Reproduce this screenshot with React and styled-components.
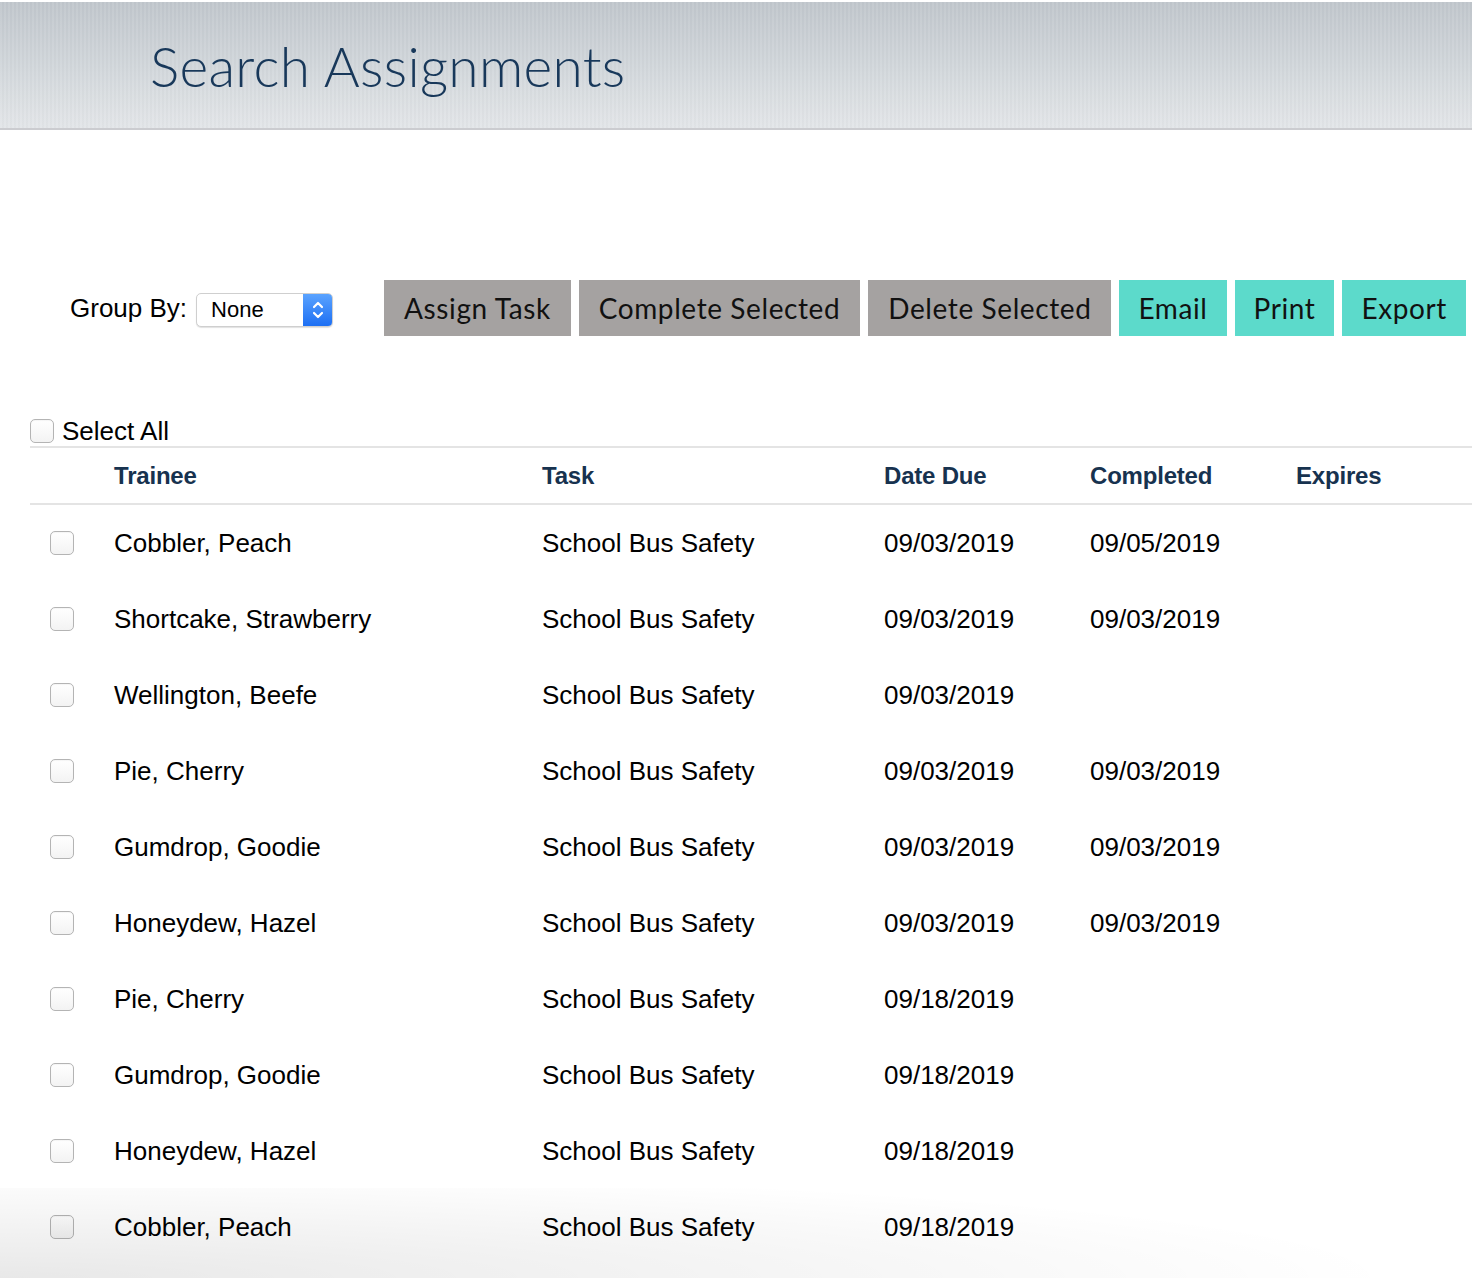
import React from 'react';
import styled, { createGlobalStyle } from 'styled-components';

const GlobalStyle = createGlobalStyle`
  html, body {
    margin: 0;
    padding: 0;
    background: #ffffff;
  }
  body {
    font-family: "Liberation Sans", Arial, sans-serif;
    color: #000;
  }
`;

const Page = styled.div`
  position: relative;
  min-height: 1278px;
  overflow: hidden;

  &::after {
    content: '';
    position: absolute;
    left: 0;
    right: 0;
    bottom: 0;
    height: 90px;
    pointer-events: none;
    background: radial-gradient(ellipse 1400px 110px at 0% 100%, rgba(0, 0, 0, 0.09), rgba(0, 0, 0, 0) 100%);
  }
`;

const Banner = styled.header`
  height: 126px;
  margin-top: 2px;
  border-bottom: 2px solid #cbccd0;
  background:
    repeating-linear-gradient(90deg, rgba(255, 255, 255, 0.05) 0 2px, rgba(0, 0, 0, 0.015) 2px 4px),
    linear-gradient(180deg, #c1c7cd 0%, #d3d8dc 55%, #e3e6e9 100%);
  display: flex;
  align-items: center;
  padding-left: 150px;
`;

const Title = styled.h1`
  margin: 0;
  margin-top: 2px;
  font-family: Lato, "Open Sans", sans-serif;
  font-weight: 300;
  font-size: 55px;
  letter-spacing: 0.3px;
  color: #18385a;
`;

const Toolbar = styled.div`
  display: flex;
  align-items: center;
  margin-top: 150px;
  padding-left: 70px;
  height: 56px;
`;

const Label = styled.span`
  font-size: 26px;
  margin-right: 9px;
`;

const Select = styled.div`
  display: flex;
  align-items: stretch;
  width: 137px;
  height: 34px;
  box-sizing: border-box;
  border: 1px solid #cfcfcf;
  border-radius: 5px;
  background: #fff;
  box-shadow: 0 1px 1px rgba(0, 0, 0, 0.12);
  overflow: hidden;
  margin: 4px 51px 0 0;
`;

const SelectValue = styled.span`
  flex: 1;
  display: flex;
  align-items: center;
  padding-left: 14px;
  font-size: 22px;
`;

const Stepper = styled.span`
  width: 29px;
  display: flex;
  align-items: center;
  justify-content: center;
  background: linear-gradient(180deg, #5aa3ff 0%, #1d6ff3 100%);
`;

const Buttons = styled.div`
  display: flex;
  gap: 8px;
`;

const ActionButton = styled.button`
  height: 56px;
  padding: 0 ${p => (p.$accent ? '19px' : '20px')};
  border: none;
  border-radius: 0;
  font-family: Lato, "Open Sans", sans-serif;
  font-size: 28px;
  font-weight: 400;
  letter-spacing: 0.6px;
  color: #111;
  background-color: ${p => (p.$accent ? '#5cdacb' : '#a5a2a1')};
  cursor: pointer;
`;

const SelectAllRow = styled.label`
  display: flex;
  align-items: center;
  gap: 8px;
  margin: 82px 0 0 30px;
  height: 26px;
  font-size: 26px;
  padding-bottom: 2px;
  border-bottom: 2px solid #e4e4e4;
`;

const Box = styled.span`
  display: inline-block;
  width: 22px;
  height: 22px;
  border: 1px solid #b4b4b4;
  border-radius: 5px;
  background: linear-gradient(180deg, #ffffff 0%, #f3f3f3 100%);
  box-shadow: inset 0 1px 1px rgba(0, 0, 0, 0.04);
  flex-shrink: 0;
`;

const Table = styled.div`
  margin-left: 30px;
`;

const Row = styled.div`
  display: grid;
  grid-template-columns: 84px 428px 342px 206px 206px 1fr;
  align-items: center;
  height: ${p => (p.$head ? '55px' : '76px')};
  border-bottom: ${p => (p.$head ? '2px solid #e4e4e4' : 'none')};
`;

const BoxCell = styled.div`
  padding-left: 20px;
  display: flex;
  align-items: center;
`;

const HeadCell = styled.div`
  font-size: 24px;
  font-weight: 700;
  color: #17324f;
  letter-spacing: -0.2px;
`;

const Cell = styled.div`
  font-size: 26px;
  white-space: nowrap;
`;

const Chevrons = () => (
  <svg width="14" height="24" viewBox="0 0 14 24" fill="none" stroke="#fff" strokeWidth="2.2" strokeLinecap="round" strokeLinejoin="round">
    <path d="M3 9 L7 5 L11 9" />
    <path d="M3 15 L7 19 L11 15" />
  </svg>
);

const rows = [
  ['Cobbler, Peach', 'School Bus Safety', '09/03/2019', '09/05/2019', ''],
  ['Shortcake, Strawberry', 'School Bus Safety', '09/03/2019', '09/03/2019', ''],
  ['Wellington, Beefe', 'School Bus Safety', '09/03/2019', '', ''],
  ['Pie, Cherry', 'School Bus Safety', '09/03/2019', '09/03/2019', ''],
  ['Gumdrop, Goodie', 'School Bus Safety', '09/03/2019', '09/03/2019', ''],
  ['Honeydew, Hazel', 'School Bus Safety', '09/03/2019', '09/03/2019', ''],
  ['Pie, Cherry', 'School Bus Safety', '09/18/2019', '', ''],
  ['Gumdrop, Goodie', 'School Bus Safety', '09/18/2019', '', ''],
  ['Honeydew, Hazel', 'School Bus Safety', '09/18/2019', '', ''],
  ['Cobbler, Peach', 'School Bus Safety', '09/18/2019', '', ''],
];

const App = () => (
  <Page>
    <GlobalStyle />
    <Banner>
      <Title>Search Assignments</Title>
    </Banner>

    <Toolbar>
      <Label>Group By:</Label>
      <Select>
        <SelectValue>None</SelectValue>
        <Stepper><Chevrons /></Stepper>
      </Select>
      <Buttons>
        <ActionButton>Assign Task</ActionButton>
        <ActionButton>Complete Selected</ActionButton>
        <ActionButton>Delete Selected</ActionButton>
        <ActionButton $accent>Email</ActionButton>
        <ActionButton $accent>Print</ActionButton>
        <ActionButton $accent>Export</ActionButton>
      </Buttons>
    </Toolbar>

    <SelectAllRow>
      <Box />
      Select All
    </SelectAllRow>

    <Table>
      <Row $head>
        <div />
        <HeadCell>Trainee</HeadCell>
        <HeadCell>Task</HeadCell>
        <HeadCell>Date Due</HeadCell>
        <HeadCell>Completed</HeadCell>
        <HeadCell>Expires</HeadCell>
      </Row>
      {rows.map((r, i) => (
        <Row key={i}>
          <BoxCell><Box /></BoxCell>
          {r.map((c, j) => (
            <Cell key={j}>{c}</Cell>
          ))}
        </Row>
      ))}
    </Table>
  </Page>
);

export default App;
